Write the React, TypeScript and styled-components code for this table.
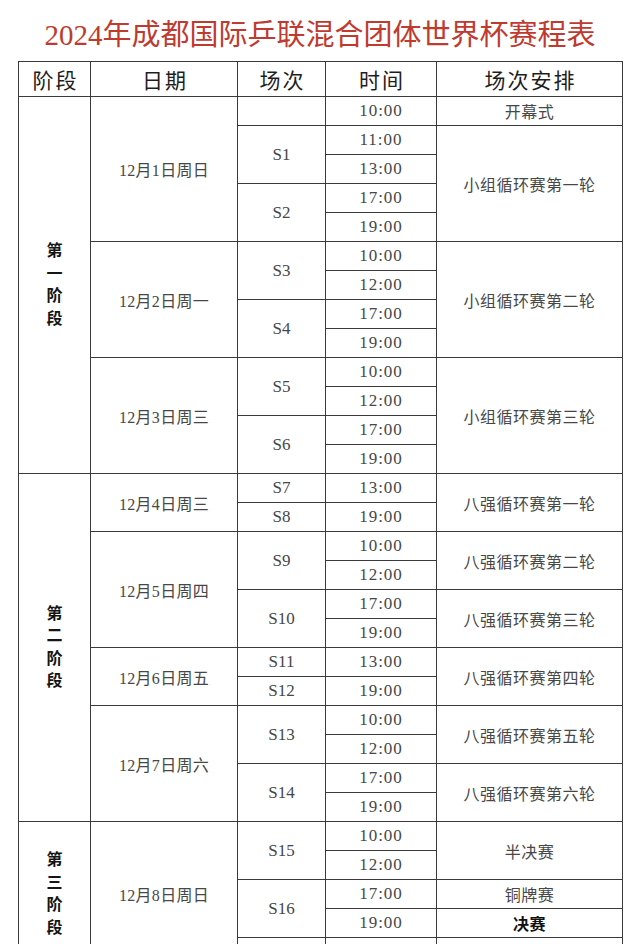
import React from "react";
import styled, { createGlobalStyle } from "styled-components";

const Global = createGlobalStyle`
  html, body { margin: 0; padding: 0; background: #ffffff; }
  body { font-family: "Liberation Serif", "Noto Sans CJK SC", serif; }
`;

const Page = styled.div`
  width: 640px;
  height: 944px;
  overflow: hidden;
  padding: 0 0 0 18px;
  box-sizing: border-box;
`;

const Title = styled.div`
  margin: 15px 0 6px -18px;
  width: 640px;
  height: 40px;
  text-align: center;
  white-space: nowrap;
  font-family: "Liberation Serif", "Noto Sans CJK SC", serif;
  font-weight: 400;
  font-size: 29px;
  line-height: 40px;
  color: #bf3a2f;
`;

const Grid = styled.div`
  display: grid;
  grid-template-columns: 72px 147px 88px 111px 186px;
  grid-template-rows: 35px;
  grid-auto-rows: 29px;
  width: 605px;
  box-sizing: border-box;
  border-top: 1px solid #3a3a3a;
  border-left: 1px solid #3a3a3a;
`;

type Tone = "head" | "date" | "sess" | "time" | "arr" | "bold" | "stage";

const Cell = styled.div<{ $span?: number; $tone?: Tone }>`
  grid-row: span ${(p) => p.$span ?? 1};
  box-sizing: border-box;
  border-right: 1px solid #3a3a3a;
  border-bottom: 1px solid #3a3a3a;
  display: flex;
  align-items: center;
  justify-content: center;
  text-align: center;
  font-family: "Liberation Serif", "Noto Sans CJK SC", serif;
  font-size: 15px;
  color: #474747;
  white-space: nowrap;
  ${(p) => p.$tone === "head" && `font-size: 21px; color: #1e1e1e; letter-spacing: 2px; padding-left: 2px;`}
  ${(p) => p.$tone === "date" && `font-size: 16px; letter-spacing: 0.3px;`}
  ${(p) => p.$tone === "sess" && `font-size: 17px;`}
  ${(p) => p.$tone === "time" && `font-size: 17px; letter-spacing: 1px;`}
  ${(p) => p.$tone === "arr" && `font-size: 16px; letter-spacing: 0.5px;`}
  ${(p) =>
    p.$tone === "bold" &&
    `font-size: 16px; letter-spacing: 0.5px; font-weight: 700; color: #111;`}
`;

const StageText = styled.div`
  display: flex;
  flex-direction: column;
  align-items: center;
  font-size: 16px;
  line-height: 22.5px;
  font-weight: 700;
  color: #151515;
`;

type C = { text?: string; span?: number; tone?: Tone };

const stage = (text: string, span: number): C => ({ text, span, tone: "stage" });
const d = (text: string, span: number): C => ({ text, span, tone: "date" });
const s = (text: string, span = 1): C => ({ text, span, tone: "sess" });
const t = (text: string): C => ({ text, tone: "time" });
const a = (text: string, span = 1): C => ({ text, span, tone: "arr" });

const cells: C[] = [
  { text: "阶段", tone: "head" },
  { text: "日期", tone: "head" },
  { text: "场次", tone: "head" },
  { text: "时间", tone: "head" },
  { text: "场次安排", tone: "head" },
  stage("第一阶段", 13),
  d("12月1日周日", 5),
  s(""),
  t("10:00"),
  a("开幕式"),
  s("S1", 2),
  t("11:00"),
  a("小组循环赛第一轮", 4),
  t("13:00"),
  s("S2", 2),
  t("17:00"),
  t("19:00"),
  d("12月2日周一", 4),
  s("S3", 2),
  t("10:00"),
  a("小组循环赛第二轮", 4),
  t("12:00"),
  s("S4", 2),
  t("17:00"),
  t("19:00"),
  d("12月3日周三", 4),
  s("S5", 2),
  t("10:00"),
  a("小组循环赛第三轮", 4),
  t("12:00"),
  s("S6", 2),
  t("17:00"),
  t("19:00"),
  stage("第二阶段", 12),
  d("12月4日周三", 2),
  s("S7"),
  t("13:00"),
  a("八强循环赛第一轮", 2),
  s("S8"),
  t("19:00"),
  d("12月5日周四", 4),
  s("S9", 2),
  t("10:00"),
  a("八强循环赛第二轮", 2),
  t("12:00"),
  s("S10", 2),
  t("17:00"),
  a("八强循环赛第三轮", 2),
  t("19:00"),
  d("12月6日周五", 2),
  s("S11"),
  t("13:00"),
  a("八强循环赛第四轮", 2),
  s("S12"),
  t("19:00"),
  d("12月7日周六", 4),
  s("S13", 2),
  t("10:00"),
  a("八强循环赛第五轮", 2),
  t("12:00"),
  s("S14", 2),
  t("17:00"),
  a("八强循环赛第六轮", 2),
  t("19:00"),
  stage("第三阶段", 5),
  d("12月8日周日", 5),
  s("S15", 2),
  t("10:00"),
  a("半决赛", 2),
  t("12:00"),
  s("S16", 2),
  t("17:00"),
  a("铜牌赛"),
  t("19:00"),
  { text: "决赛", tone: "bold" },
  s(""),
  t(""),
  a(""),
];

export default function App() {
  return (
    <Page>
      <Global />
      <Title>2024年成都国际乒联混合团体世界杯赛程表</Title>
      <Grid>
        {cells.map((c, i) => (
          <Cell key={i} $span={c.span} $tone={c.tone}>
            {c.tone === "stage" ? (
              <StageText>
                {Array.from(c.text ?? "").map((ch, j) => (
                  <span key={j}>{ch}</span>
                ))}
              </StageText>
            ) : (
              c.text
            )}
          </Cell>
        ))}
      </Grid>
    </Page>
  );
}
